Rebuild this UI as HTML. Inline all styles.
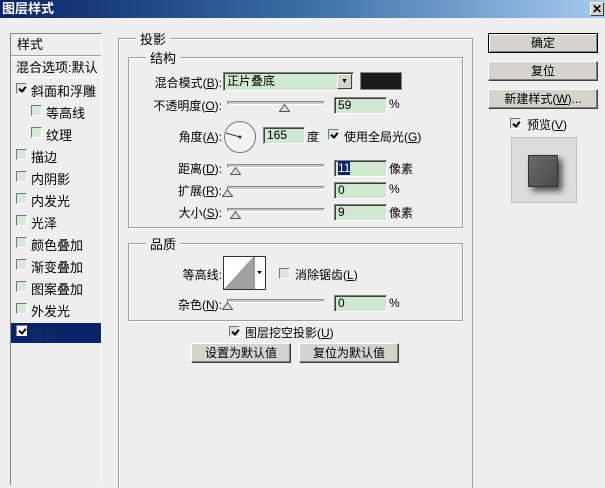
<!DOCTYPE html>
<html><head><meta charset="utf-8"><style>
*{margin:0;padding:0;box-sizing:border-box}
body{width:605px;height:482px;overflow:hidden;background:#eeeeee;font:12px "Liberation Sans","Noto Sans CJK SC","WenQuanYi Zen Hei",sans-serif;color:#000;position:relative}
.a{position:absolute;white-space:nowrap}
.title{left:0;top:0;width:605px;height:18px;background:linear-gradient(90deg,#0a246a,#3a6ea5 50%,#a6caf0);color:#fff;font-weight:bold;font-size:13px;line-height:18px;padding-left:2px}
.list{left:10px;top:33px;width:92px;height:452px;border:1px solid #888;border-right-color:#fff;border-bottom:none;background:#eeeeee}
.lt{font-size:13px}
.cb{position:absolute;width:11px;height:11px;border:1px solid #777;border-right-color:#fff;border-bottom-color:#fff;background:#d8e8d8}
.cb.k::after{content:"";position:absolute;left:3px;top:1px;width:3px;height:5px;border:solid #000;border-width:0 2px 2px 0;transform:rotate(40deg)}
.grp{border:1px solid #a0a0a0;box-shadow:1px 1px 0 #fff inset,1px 1px 0 #fff}
.lg{background:#eeeeee;padding:0 4px}
.inp{height:17px;background:#cfe8d0;border:1px solid #808080;border-right-color:#fff;border-bottom-color:#fff;box-shadow:inset 1px 1px 0 #404040;font-size:12px;line-height:15px;padding-left:3px}
.trk{height:4px;border:1px solid #888;border-right-color:#fff;border-bottom-color:#fff;background:#c8c8c8}
.th{position:absolute;width:11px;height:8px}
.btn{height:20px;background:#d6d3ce;border:1px solid #fff;border-right-color:#404040;border-bottom-color:#404040;box-shadow:inset -1px -1px 0 #808080;text-align:center;line-height:18px}
.r{text-align:right}
</style></head><body>
<div class="a title">图层样式<span style="position:absolute;right:1px;top:2px;width:14px;height:14px;background:#d6d3ce;color:#000;font-size:12px;line-height:13px;text-align:center;border:1px solid #fff;border-right-color:#404040;border-bottom-color:#404040">✕</span></div>

<div class="a list"></div>
<div class="a lt" style="left:17px;top:34px">样式</div>
<div class="a" style="left:11px;top:55px;width:90px;border-top:1px solid #a0a0a0;border-bottom:1px solid #fff"></div>
<div class="a lt" style="left:16px;top:57px">混合选项:默认</div>
<div class="a" style="left:11px;top:77px;width:90px;border-top:1px solid #fff"></div>

<div class="cb k" style="left:16px;top:83px"></div><div class="a lt" style="left:31px;top:81px">斜面和浮雕</div>
<div class="cb" style="left:31px;top:105px"></div><div class="a lt" style="left:46px;top:103px">等高线</div>
<div class="cb" style="left:31px;top:127px"></div><div class="a lt" style="left:46px;top:125px">纹理</div>
<div class="cb" style="left:16px;top:149px"></div><div class="a lt" style="left:31px;top:147px">描边</div>
<div class="cb" style="left:16px;top:171px"></div><div class="a lt" style="left:31px;top:169px">内阴影</div>
<div class="cb" style="left:16px;top:193px"></div><div class="a lt" style="left:31px;top:191px">内发光</div>
<div class="cb" style="left:16px;top:215px"></div><div class="a lt" style="left:31px;top:213px">光泽</div>
<div class="cb" style="left:16px;top:237px"></div><div class="a lt" style="left:31px;top:235px">颜色叠加</div>
<div class="cb" style="left:16px;top:259px"></div><div class="a lt" style="left:31px;top:257px">渐变叠加</div>
<div class="cb" style="left:16px;top:281px"></div><div class="a lt" style="left:31px;top:279px">图案叠加</div>
<div class="cb" style="left:16px;top:303px"></div><div class="a lt" style="left:31px;top:301px">外发光</div>
<div class="a" style="left:11px;top:323px;width:90px;height:20px;background:#0a246a"></div>
<div class="cb k" style="left:16px;top:325px;background:#fff"></div><div class="a lt" style="left:31px;top:324px;color:#1f2f60">投影</div>

<div class="a" style="left:118px;top:38px;width:355px;height:450px;border:1px solid #a0a0a0;border-bottom:none;box-shadow:inset 1px 1px 0 #fff"></div>
<div class="a lg" style="left:136px;top:29px;font-size:13px">投影</div>

<div class="a grp" style="left:128px;top:57px;width:335px;height:171px"></div>
<div class="a lg" style="left:146px;top:48px;font-size:13px">结构</div>

<div class="a r" style="left:140px;top:74px;width:82px">混合模式(<u>B</u>):</div>
<div class="a inp" style="left:223px;top:72px;width:131px;height:19px;line-height:17px">正片叠底</div>
<div class="a" style="left:337px;top:74px;width:15px;height:15px;background:#d6d3ce;border:1px solid #fff;border-right-color:#404040;border-bottom-color:#404040;font-size:7px;text-align:center;line-height:13px">▼</div>
<div class="a" style="left:360px;top:72px;width:42px;height:18px;background:#1e1a1a;border:1px solid #888"></div>

<div class="a r" style="left:140px;top:97px;width:82px">不透明度(<u>O</u>):</div>
<div class="a trk" style="left:227px;top:101px;width:98px"></div>
<svg class="th" style="left:279px;top:104px" viewBox="0 0 11 8"><path d="M5.5 0.5L10.5 7.5H0.5Z" fill="#ddd" stroke="#555"/></svg>
<div class="a inp" style="left:334px;top:97px;width:53px">59</div>
<div class="a" style="left:389px;top:97px">%</div>

<div class="a r" style="left:140px;top:128px;width:82px">角度(<u>A</u>):</div>
<svg class="a" style="left:223px;top:120px" width="36" height="34" viewBox="0 0 36 34"><circle cx="17" cy="17" r="15.5" fill="#f2f2f2" stroke="#777"/><path d="M3 13L17 17" stroke="#333" stroke-width="1"/><circle cx="17" cy="17" r="1.5" fill="#333"/></svg>
<div class="a inp" style="left:263px;top:127px;width:42px">165</div>
<div class="a" style="left:307px;top:128px">度</div>
<div class="cb k" style="left:328px;top:129px"></div>
<div class="a" style="left:344px;top:128px">使用全局光(<u>G</u>)</div>

<div class="a r" style="left:140px;top:160px;width:82px">距离(<u>D</u>):</div>
<div class="a trk" style="left:227px;top:164px;width:98px"></div>
<svg class="th" style="left:230px;top:167px" viewBox="0 0 11 8"><path d="M5.5 0.5L10.5 7.5H0.5Z" fill="#ddd" stroke="#555"/></svg>
<div class="a inp" style="left:334px;top:160px;width:53px"><span style="background:#0a246a;color:#fff">11</span></div>
<div class="a" style="left:389px;top:160px">像素</div>

<div class="a r" style="left:140px;top:182px;width:82px">扩展(<u>R</u>):</div>
<div class="a trk" style="left:227px;top:186px;width:98px"></div>
<svg class="th" style="left:222px;top:189px" viewBox="0 0 11 8"><path d="M5.5 0.5L10.5 7.5H0.5Z" fill="#ddd" stroke="#555"/></svg>
<div class="a inp" style="left:334px;top:182px;width:53px">0</div>
<div class="a" style="left:389px;top:182px">%</div>

<div class="a r" style="left:140px;top:204px;width:82px">大小(<u>S</u>):</div>
<div class="a trk" style="left:227px;top:208px;width:98px"></div>
<svg class="th" style="left:230px;top:211px" viewBox="0 0 11 8"><path d="M5.5 0.5L10.5 7.5H0.5Z" fill="#ddd" stroke="#555"/></svg>
<div class="a inp" style="left:334px;top:204px;width:53px">9</div>
<div class="a" style="left:389px;top:204px">像素</div>

<div class="a grp" style="left:128px;top:243px;width:335px;height:78px"></div>
<div class="a lg" style="left:146px;top:234px;font-size:13px">品质</div>
<div class="a r" style="left:140px;top:266px;width:82px">等高线:</div>
<svg class="a" style="left:223px;top:256px" width="43" height="34" viewBox="0 0 43 34"><rect x="0.5" y="0.5" width="42" height="33" fill="#fff" stroke="#333"/><path d="M1 33L30 1V33Z" fill="#a0a0a0"/><line x1="31" y1="0" x2="31" y2="34" stroke="#333"/><path d="M34 15h5l-2.5 3z" fill="#000"/></svg>
<div class="cb" style="left:279px;top:268px"></div>
<div class="a" style="left:295px;top:266px">消除锯齿(<u>L</u>)</div>
<div class="a r" style="left:140px;top:296px;width:82px">杂色(<u>N</u>):</div>
<div class="a trk" style="left:227px;top:299px;width:98px"></div>
<svg class="th" style="left:222px;top:302px" viewBox="0 0 11 8"><path d="M5.5 0.5L10.5 7.5H0.5Z" fill="#ddd" stroke="#555"/></svg>
<div class="a inp" style="left:334px;top:295px;width:53px">0</div>
<div class="a" style="left:389px;top:296px">%</div>

<div class="cb k" style="left:229px;top:326px"></div>
<div class="a" style="left:245px;top:324px">图层挖空投影(<u>U</u>)</div>
<div class="a btn" style="left:191px;top:343px;width:100px">设置为默认值</div>
<div class="a btn" style="left:299px;top:343px;width:100px">复位为默认值</div>

<div class="a btn" style="left:488px;top:33px;width:110px;border:1px solid #000;box-shadow:inset 1px 1px 0 #fff,inset -1px -1px 0 #808080">确定</div>
<div class="a btn" style="left:488px;top:61px;width:110px">复位</div>
<div class="a btn" style="left:488px;top:89px;width:110px">新建样式(<u>W</u>)...</div>
<div class="cb k" style="left:510px;top:118px"></div>
<div class="a" style="left:527px;top:116px">预览(<u>V</u>)</div>
<div class="a" style="left:511px;top:137px;width:66px;height:66px;background:#dcdcdc;border:1px solid #c4c4c4"></div>
<div class="a" style="left:528px;top:155px;width:30px;height:32px;background:linear-gradient(135deg,#6a6a6a,#4a4a4a);border:1px solid #333;box-shadow:4px 4px 6px rgba(0,0,0,.65)"></div>
</body></html>
